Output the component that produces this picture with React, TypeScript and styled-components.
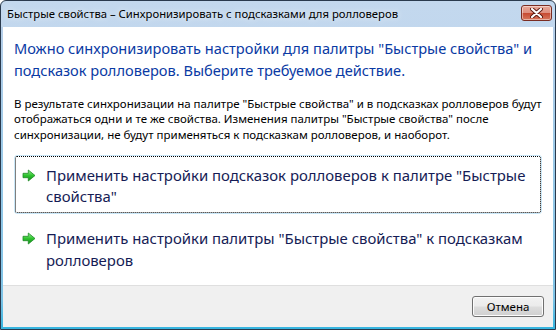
import * as React from "react";
import styled, { createGlobalStyle } from "styled-components";

const GlobalStyle = createGlobalStyle`
  html, body {
    margin: 0;
    padding: 0;
    background: #ffffff;
  }
  * {
    box-sizing: border-box;
  }
`;

const font = `"Noto Sans", "Open Sans", "Liberation Sans", sans-serif`;

const Window = styled.div`
  width: 556px;
  height: 330px;
  display: flex;
  flex-direction: column;
  border: 1px solid #2a3a4e;
  border-radius: 6px 6px 0 0;
  background: linear-gradient(#c3d8ee, #b6cfe9);
  font-family: ${font};
  overflow: hidden;
`;

const TitleBar = styled.div`
  height: 26px;
  flex-shrink: 0;
  display: flex;
  justify-content: space-between;
  align-items: flex-start;
  padding: 4px 3px 0 6px;
`;

const TitleText = styled.div`
  font-size: 11.3px;
  line-height: 18px;
  color: #000;
  text-shadow: 0 0 6px rgba(255, 255, 255, 0.9);
`;

const CloseButton = styled.div`
  width: 31px;
  height: 16px;
  border: 1px solid #7a2c22;
  border-radius: 3px;
  background: linear-gradient(#e8a797 0%, #de8f7f 48%, #c74a32 52%, #d7775d 100%);
  box-shadow: inset 0 0 0 1px rgba(255, 255, 255, 0.45);
  display: flex;
  align-items: center;
  justify-content: center;
`;

const Frame = styled.div`
  flex: 1;
  min-height: 0;
  display: flex;
  flex-direction: column;
  padding: 0 2px 2px;
  background: linear-gradient(#b6cfe9, #7ec3e6 90%, #34b4df);
`;

const Content = styled.div`
  flex: 1;
  min-height: 0;
  overflow: hidden;
  background: #ffffff;
  padding: 10px 11px 0 11px;
  display: flex;
  flex-direction: column;
`;

const MainInstruction = styled.div`
  font-size: 14.6px;
  line-height: 22px;
  color: #0a3aa4;
  white-space: nowrap;
`;

const BodyText = styled.div`
  margin-top: 15px;
  font-size: 11.5px;
  line-height: 15.3px;
  color: #000;
  white-space: nowrap;
`;

const LinkList = styled.div`
  margin-top: 13px;
  display: flex;
  flex-direction: column;
  gap: 4px;
`;

const CommandLink = styled.div<{ $focused?: boolean }>`
  display: flex;
  align-items: flex-start;
  gap: 10px;
  padding: 9px 8px 6px 7px;
  border: 1px solid ${(p) => (p.$focused ? "#c9e7f8" : "transparent")};
  border-radius: 3px;
  outline: ${(p) => (p.$focused ? "1px dotted #000" : "none")};
  outline-offset: -2px;
`;

const ArrowBox = styled.div`
  width: 14px;
  height: 21px;
  display: flex;
  align-items: center;
  flex-shrink: 0;
`;

const LinkText = styled.div`
  font-size: 14.9px;
  line-height: 21.3px;
  color: #151c55;
  white-space: nowrap;
`;

const Footer = styled.div`
  height: 42px;
  flex-shrink: 0;
  background: #f0f0f0;
  border-top: 1px solid #dfdfdf;
  display: flex;
  justify-content: flex-end;
  align-items: flex-start;
  padding: 10px 9px 0 0;
`;

const Button = styled.div`
  width: 72px;
  height: 21px;
  border: 1px solid #707070;
  border-radius: 3px;
  background: linear-gradient(#f2f2f2 0%, #ebebeb 48%, #dddddd 52%, #cfcfcf 100%);
  box-shadow: inset 0 0 0 1px #fcfcfc;
  font-size: 11.5px;
  line-height: 19px;
  text-align: center;
  color: #000;
`;

const CloseGlyph = () => (
  <svg width="13" height="10" viewBox="0 0 13 10">
    <path
      d="M2 1 L11 9 M11 1 L2 9"
      stroke="#5a1a12"
      strokeWidth="4"
      strokeLinecap="round"
    />
    <path
      d="M2 1 L11 9 M11 1 L2 9"
      stroke="#ffffff"
      strokeWidth="2.2"
      strokeLinecap="round"
    />
  </svg>
);

const GreenArrow = () => (
  <svg width="14" height="13" viewBox="0 0 14 13">
    <defs>
      <linearGradient id="ga" x1="0" y1="0" x2="0" y2="1">
        <stop offset="0" stopColor="#9cf098" />
        <stop offset="0.5" stopColor="#2fc42f" />
        <stop offset="1" stopColor="#128a1a" />
      </linearGradient>
    </defs>
    <path
      d="M1 4.3 H6.3 V1 L13 6.5 L6.3 12 V8.7 H1 Z"
      fill="url(#ga)"
      stroke="#1d8a24"
      strokeWidth="0.8"
      strokeLinejoin="round"
    />
  </svg>
);

const links = [
  {
    text: (
      <>
        Применить настройки подсказок ролловеров к палитре "Быстрые
        <br />
        свойства"
      </>
    ),
    focused: true,
  },
  {
    text: (
      <>
        Применить настройки палитры "Быстрые свойства" к подсказкам
        <br />
        ролловеров
      </>
    ),
    focused: false,
  },
];

export default function App() {
  return (
    <>
      <GlobalStyle />
      <Window>
        <TitleBar>
          <TitleText>Быстрые свойства – Синхронизировать с подсказками для ролловеров</TitleText>
          <CloseButton>
            <CloseGlyph />
          </CloseButton>
        </TitleBar>
        <Frame>
          <Content>
            <MainInstruction>
              Можно синхронизировать настройки для палитры "Быстрые свойства" и
              <br />
              подсказок ролловеров. Выберите требуемое действие.
            </MainInstruction>
            <BodyText>
              В результате синхронизации на палитре "Быстрые свойства" и в подсказках ролловеров будут
              <br />
              отображаться одни и те же свойства. Изменения палитры "Быстрые свойства" после
              <br />
              синхронизации, не будут применяться к подсказкам ролловеров, и наоборот.
            </BodyText>
            <LinkList>
              {links.map((l, i) => (
                <CommandLink key={i} $focused={l.focused}>
                  <ArrowBox>
                    <GreenArrow />
                  </ArrowBox>
                  <LinkText>{l.text}</LinkText>
                </CommandLink>
              ))}
            </LinkList>
          </Content>
          <Footer>
            <Button>Отмена</Button>
          </Footer>
        </Frame>
      </Window>
    </>
  );
}
